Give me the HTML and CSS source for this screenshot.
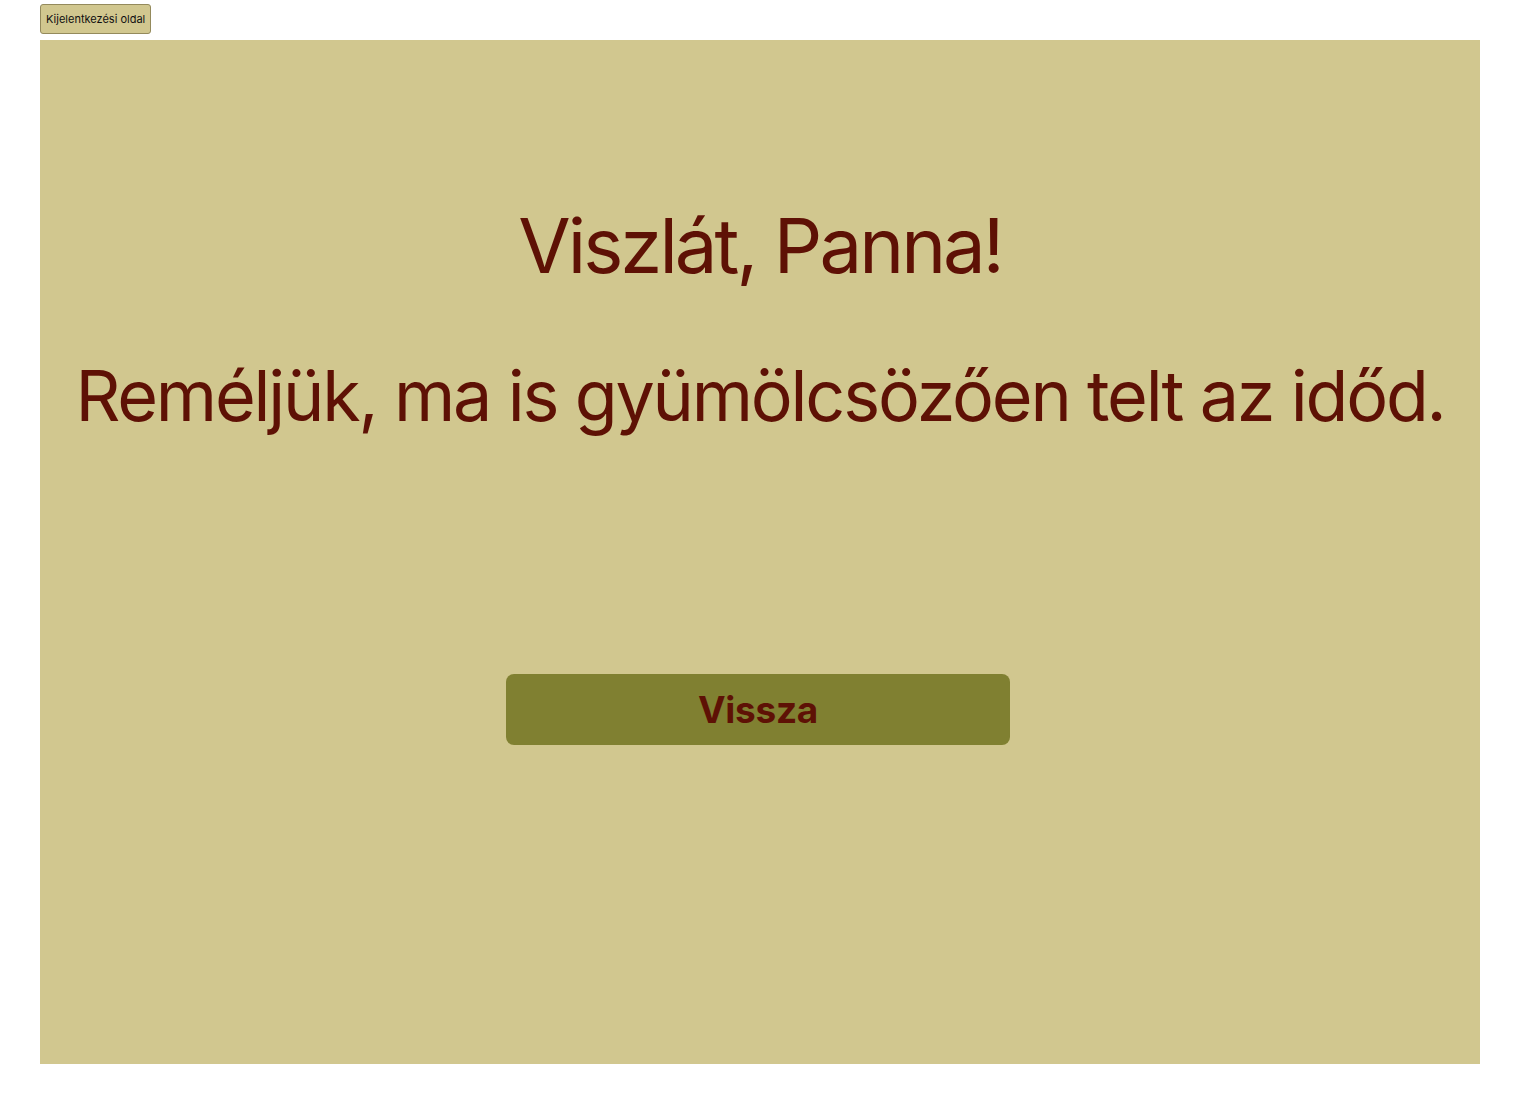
FILE: index.html
```html
<!DOCTYPE html>
<html lang="hu">
<head>
<meta charset="utf-8">
<title>Kijelentkezés</title>
<link rel="stylesheet" href="styles.css">
</head>
<body>
<div class="page">
  <div class="topbar">
    <button class="logout-link">Kijelentkezési oldal</button>
  </div>
  <main class="panel">
    <h1 class="title">Viszlát, Panna!</h1>
    <p class="subtitle">Reméljük, ma is gyümölcsözően telt az időd.</p>
    <button class="back-btn">Vissza</button>
  </main>
</div>
</body>
</html>
```

FILE: styles.css
```css
* { box-sizing: border-box; }
html, body { margin: 0; padding: 0; background: #ffffff; }
body { font-family: Inter, "Noto Sans", sans-serif; }
.page { padding: 4px 40px 40px; }
.topbar { height: 36px; display: flex; align-items: flex-start; }
.logout-link {
  font-family: Inter, sans-serif;
  font-size: 11px;
  color: #111;
  background: #d1c78f;
  border: 1px solid #948a5c;
  border-radius: 3px;
  height: 30px;
  padding: 0 5px;
  cursor: pointer;
}
.panel {
  background: #d1c78f;
  height: 1024px;
  display: flex;
  flex-direction: column;
  align-items: center;
  padding-top: 159px;
  color: #5e1105;
}
.title {
  margin: 0;
  font-size: 76px;
  font-weight: 400;
  line-height: 92px;
  letter-spacing: -2.95px;
  white-space: nowrap;
}
.subtitle {
  margin: 63px 0 0;
  font-size: 70px;
  font-weight: 400;
  line-height: 84px;
  letter-spacing: -2.2px;
  white-space: nowrap;
}
.back-btn {
  margin: 236px 4px 0 0;
  width: 504px;
  height: 71px;
  border: none;
  border-radius: 8px;
  background: #808031;
  color: #5e1105;
  font-family: Inter, sans-serif;
  font-size: 37px;
  font-weight: 700;
  letter-spacing: -0.3px;
  cursor: pointer;
}
```
